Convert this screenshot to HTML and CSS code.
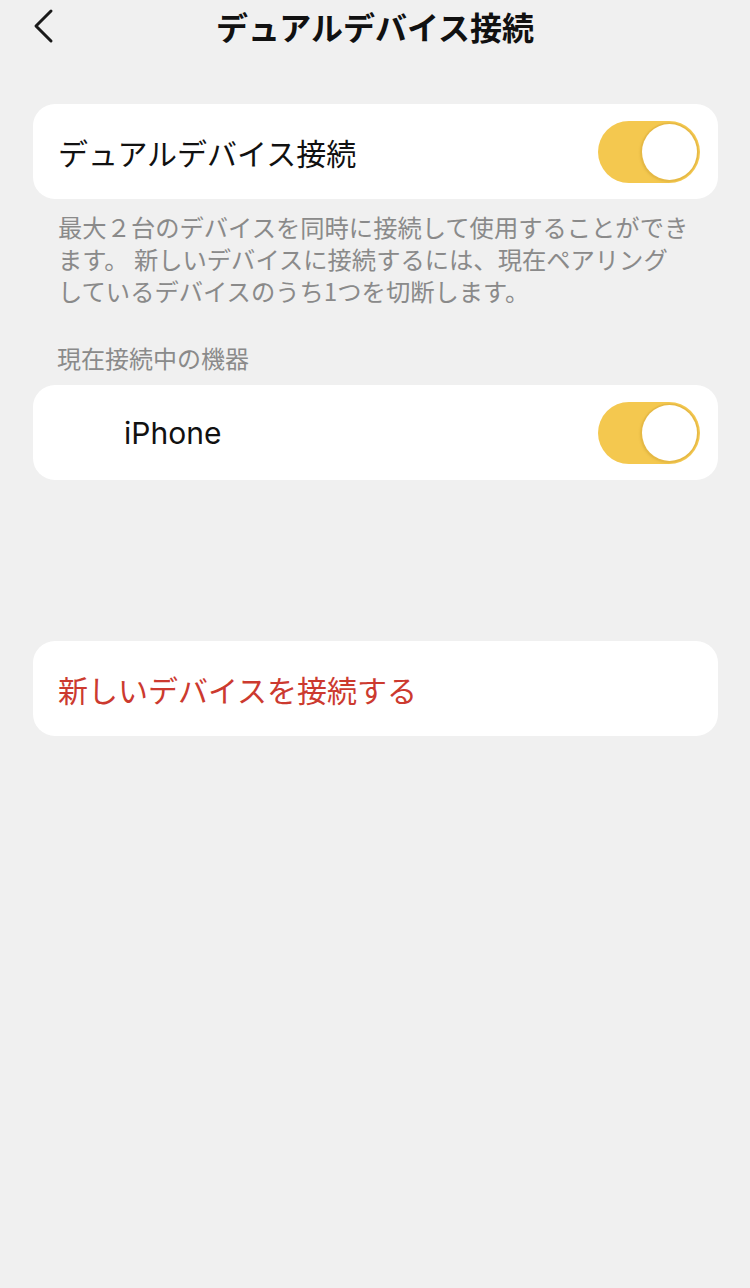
FILE: index.html
```html
<!DOCTYPE html>
<html lang="ja">
<head>
<meta charset="utf-8">
<link rel="stylesheet" href="styles.css">
</head>
<body>
<header class="nav">
  <div class="nav-left">
    <svg class="back" width="24" height="36" viewBox="0 0 24 36"><path d="M19 3 L4 18 L19 33" fill="none" stroke="#1a1a1a" stroke-width="3" stroke-linecap="round" stroke-linejoin="round"/></svg>
  </div>
  <h1 class="title">デュアルデバイス接続</h1>
  <div class="nav-right"></div>
</header>
<main class="content">
  <section class="card">
    <span class="card-label">デュアルデバイス接続</span>
    <span class="toggle"><span class="knob"></span></span>
  </section>
  <p class="desc">最大２台のデバイスを同時に接続して使用することができ<br>ます。 新しいデバイスに接続するには、現在ペアリング<br>しているデバイスのうち1つを切断します。</p>
  <p class="section-label">現在接続中の機器</p>
  <section class="card device">
    <span class="card-label latin">iPhone</span>
    <span class="toggle"><span class="knob"></span></span>
  </section>
  <section class="card action">
    <span class="card-label red">新しいデバイスを接続する</span>
  </section>
</main>
</body>
</html>
```
FILE: styles.css
```css
html, body {
  margin: 0;
  padding: 0;
  background: #f0f0f0;
  font-family: "Noto Sans CJK JP", "Noto Sans", sans-serif;
  color: #111;
}
body { width: 750px; height: 1288px; }

.nav {
  height: 52px;
  display: grid;
  grid-template-columns: 1fr auto 1fr;
  align-items: center;
}
.nav-left { padding-left: 32px; display: flex; align-items: center; }
.back { display: block; }
.title {
  margin: 0;
  font-size: 32px;
  font-weight: 700;
  line-height: 48px;
  letter-spacing: 0;
}

.content { padding: 0 32px 0 33px; }

.card {
  background: #fff;
  border-radius: 22px;
  height: 95px;
  display: flex;
  align-items: center;
  justify-content: space-between;
  padding: 0 18px 0 25px;
  margin-top: 52px;
}
.card-label { font-size: 30px; line-height: 1; }
.latin { font-family: "Inter", "Noto Sans", sans-serif; font-size: 30px; }
.red { color: #cc3a2f; }

.device { margin-top: 11px; padding-left: 91px; }
.action { margin-top: 161px; }

.toggle {
  width: 102px;
  height: 62px;
  border-radius: 31px;
  background: #f4c84f;
  position: relative;
  flex: none;
}
.knob {
  position: absolute;
  top: 3px;
  right: 3px;
  width: 55px;
  height: 56px;
  border-radius: 50%;
  background: #fff;
  box-shadow: 0 0 0 1.5px #e6b945, -1px 1px 3px rgba(150,110,20,0.35);
}

.desc {
  margin: 12px 0 0 25px;
  font-size: 24.3px;
  line-height: 32px;
  color: #8a8a8a;
  white-space: nowrap;
}
.section-label {
  margin: 35px 0 0 24px;
  font-size: 24px;
  line-height: 32px;
  color: #8a8a8a;
}
```
